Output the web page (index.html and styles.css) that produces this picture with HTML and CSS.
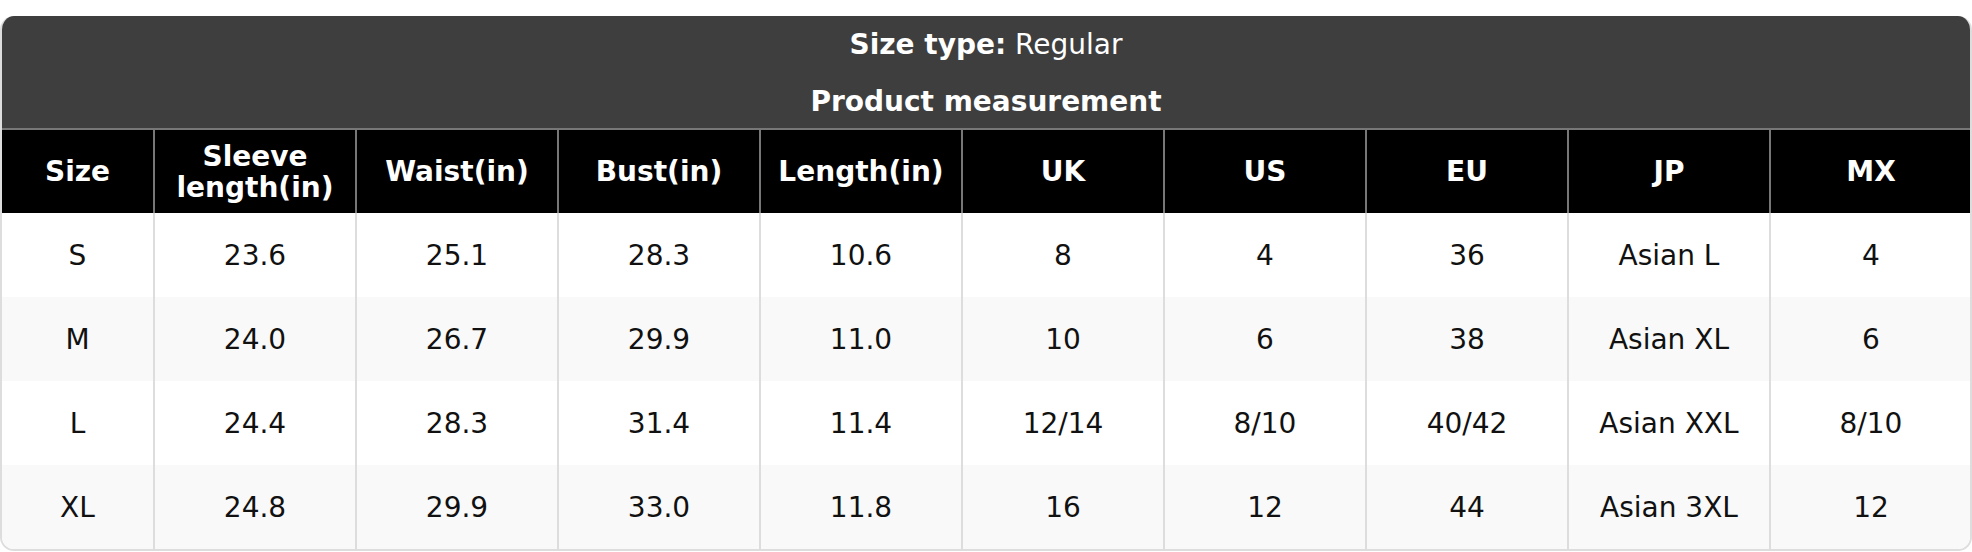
FILE: index.html
```html
<!DOCTYPE html>
<html>
<head>
<meta charset="utf-8">
<link rel="stylesheet" href="styles.css">
</head>
<body>
<div class="card">
  <div class="banner">
    <div class="type"><b>Size type:</b> Regular</div>
    <div class="title">Product measurement</div>
  </div>
  <table class="sizes">
    <colgroup>
      <col class="c-first">
      <col><col><col><col><col><col><col><col><col>
    </colgroup>
    <thead>
      <tr>
        <th>Size</th><th>Sleeve<br>length(in)</th><th>Waist(in)</th><th>Bust(in)</th><th>Length(in)</th><th>UK</th><th>US</th><th>EU</th><th>JP</th><th>MX</th>
      </tr>
    </thead>
    <tbody>
      <tr><td>S</td><td>23.6</td><td>25.1</td><td>28.3</td><td>10.6</td><td>8</td><td>4</td><td>36</td><td>Asian L</td><td>4</td></tr>
      <tr><td>M</td><td>24.0</td><td>26.7</td><td>29.9</td><td>11.0</td><td>10</td><td>6</td><td>38</td><td>Asian XL</td><td>6</td></tr>
      <tr><td>L</td><td>24.4</td><td>28.3</td><td>31.4</td><td>11.4</td><td>12/14</td><td>8/10</td><td>40/42</td><td>Asian XXL</td><td>8/10</td></tr>
      <tr><td>XL</td><td>24.8</td><td>29.9</td><td>33.0</td><td>11.8</td><td>16</td><td>12</td><td>44</td><td>Asian 3XL</td><td>12</td></tr>
    </tbody>
  </table>
</div>
</body>
</html>
```

FILE: styles.css
```css
html, body {
  margin: 0;
  padding: 0;
  background: #ffffff;
}
body {
  padding-top: 16px;
  font-family: "DejaVu Sans", Verdana, sans-serif;
}
.card {
  width: 1972px;
  box-sizing: border-box;
  border: 2px solid #dddddd;
  border-top: none;
  border-radius: 14px;
  overflow: hidden;
  background: #ffffff;
}
.banner {
  background: #3e3e3e;
  color: #ffffff;
  text-align: center;
  height: 112px;
  box-sizing: border-box;
  padding-top: 12px;
  margin: 0 -2px;
}
.type {
  font-size: 28px;
  line-height: 34px;
}
.type b {
  font-weight: bold;
}
.title {
  font-size: 28px;
  font-weight: bold;
  line-height: 34px;
  margin-top: 23px;
}
.sizes {
  width: 1972px;
  margin-left: -2px;
  border-collapse: collapse;
  table-layout: fixed;
  font-size: 28px;
}
.sizes col { width: 202px; }
.sizes col.c-first { width: 153px; }
.sizes th {
  background: #000000;
  color: #ffffff;
  font-weight: bold;
  height: 83px;
  padding: 0;
  border: 2px solid #777777;
  border-bottom: none;
  line-height: 31px;
  text-align: center;
}
.sizes td {
  height: 84px;
  padding: 0;
  border-left: 2px solid #dddddd;
  border-right: 2px solid #dddddd;
  text-align: center;
  color: #111111;
}
.sizes tbody tr:nth-child(even) td {
  background: #f9f9f9;
}
```
